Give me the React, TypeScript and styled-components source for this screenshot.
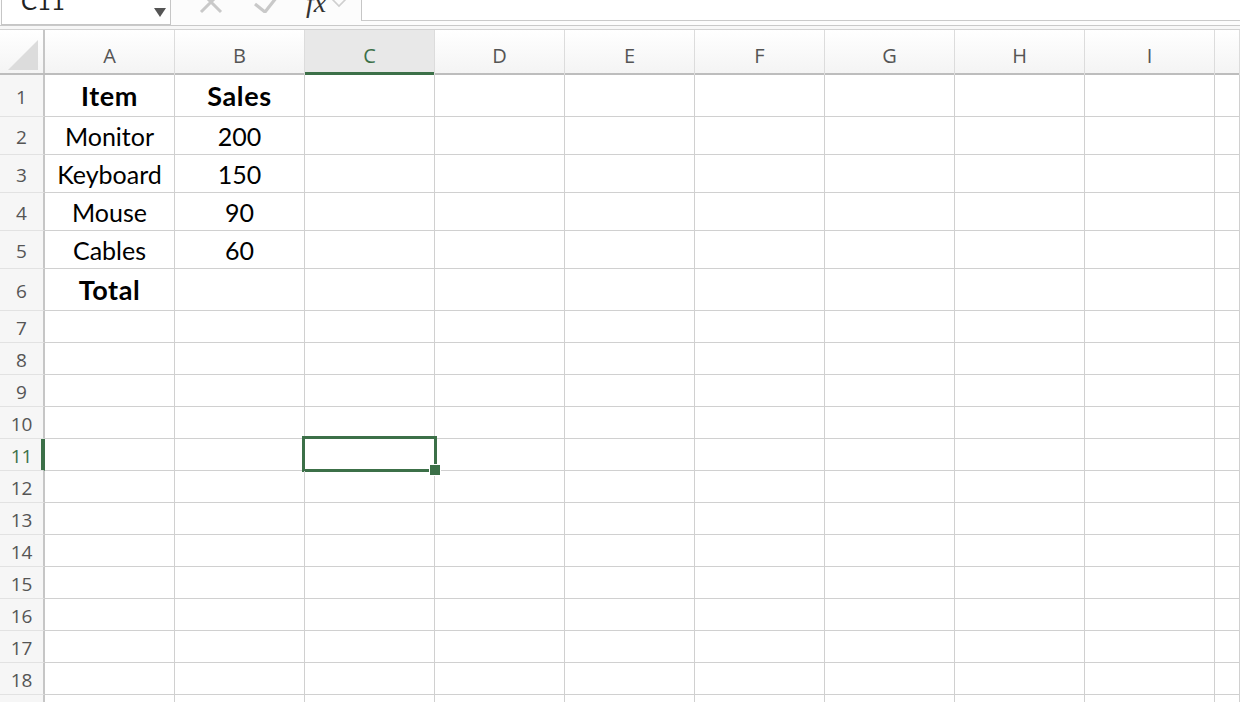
import styled, { createGlobalStyle } from 'styled-components';

const GREEN = '#3c7048';
const GRID = '#d0d0d0';
const COLS = ['A', 'B', 'C', 'D', 'E', 'F', 'G', 'H', 'I', 'J'];
const TEMPLATE = '45px repeat(9, 130px) 1fr';

const ROW_HEIGHTS = [42, 38, 38, 38, 38, 42, 32, 32, 32, 32, 32, 32, 32, 32, 32, 32, 32, 32, 32];

const data: Record<number, { a?: string; b?: string; bold?: boolean }> = {
	1: { a: 'Item', b: 'Sales', bold: true },
	2: { a: 'Monitor', b: '200' },
	3: { a: 'Keyboard', b: '150' },
	4: { a: 'Mouse', b: '90' },
	5: { a: 'Cables', b: '60' },
	6: { a: 'Total', bold: true },
};

const SELECTED_ROW = 11;
const SELECTED_COL = 'C';

function App() {
	return (
		<Wrap>
			<GlobalStyle />
			<Toolbar>
				<NameBox>
					<NameText>C11</NameText>
					<DropArrow />
				</NameBox>
				<Icons>
					<svg width="24" height="24" viewBox="0 0 24 24" style={{ marginTop: -10 }}>
						<path d="M2 2 L22 22 M22 2 L2 22" stroke="#c9c9c9" strokeWidth="3" fill="none" />
					</svg>
					<svg width="28" height="24" viewBox="0 0 28 24" style={{ marginTop: -11 }}>
						<path d="M2 15 L12 23 L27 4" stroke="#c9c9c9" strokeWidth="3.2" fill="none" />
					</svg>
					<Fx>fx</Fx>
					<svg width="16" height="10" viewBox="0 0 16 10" style={{ marginTop: -2 }}>
						<path d="M1 1 L8 8 L15 1" stroke="#cfcfcf" strokeWidth="1.6" fill="none" />
					</svg>
				</Icons>
				<FormulaInput />
			</Toolbar>
			<Sheet>
				<HeaderRow>
					<Corner>
						<svg width="30" height="30" viewBox="0 0 30 30">
							<path d="M0 30 L30 30 L30 0 Z" fill="#dcdcdc" />
						</svg>
					</Corner>
					{COLS.map((c) => (
						<ColHead key={c} $active={c === SELECTED_COL}>
							{c === 'J' ? '' : c}
						</ColHead>
					))}
				</HeaderRow>
				{ROW_HEIGHTS.map((h, i) => {
					const n = i + 1;
					const row = data[n];
					return (
						<Row key={n} $h={h}>
							<RowHead $active={n === SELECTED_ROW}>{n}</RowHead>
							{COLS.map((c) => (
								<Cell key={c} $bold={row?.bold} $selected={n === SELECTED_ROW && c === SELECTED_COL}>
									{c === 'A' ? row?.a : c === 'B' ? row?.b : ''}
								</Cell>
							))}
						</Row>
					);
				})}
			</Sheet>
		</Wrap>
	);
}

export default App;

const GlobalStyle = createGlobalStyle`
	html, body {
		margin: 0;
		padding: 0;
		background: #fff;
		overflow: hidden;
	}
	* {
		box-sizing: border-box;
	}
`;

const Wrap = styled.div`
	width: 1240px;
	height: 702px;
	overflow: hidden;
	font-family: Lato, 'Open Sans', sans-serif;
`;

const Toolbar = styled.div`
	height: 30px;
	display: flex;
	align-items: flex-start;
	background: #fcfcfc;
	border-bottom: 1px solid #d2d2d2;
	box-shadow: inset 0 -3px 0 #f7f7f7, inset 0 -4px 0 #c9c9c9;
	overflow: hidden;
`;

const NameBox = styled.div`
	width: 170px;
	height: 25px;
	margin-left: 1px;
	border: 1px solid #c6c6c6;
	border-top: none;
	background: #fff;
	display: flex;
	justify-content: space-between;
	align-items: flex-start;
	overflow: hidden;
`;

const NameText = styled.span`
	font-size: 24px;
	line-height: 24px;
	margin-top: -11px;
	margin-left: 19px;
	color: #222;
`;

const DropArrow = styled.span`
	width: 0;
	height: 0;
	margin: 8px 4px 0 0;
	border-left: 6px solid transparent;
	border-right: 6px solid transparent;
	border-top: 9px solid #555;
`;

const Icons = styled.div`
	width: 190px;
	display: flex;
	align-items: flex-start;
	padding-left: 28px;
	gap: 31px;

	svg {
		flex-shrink: 0;
	}
	svg:nth-child(2) {
		margin-left: -1px;
	}
	svg:last-child {
		margin-left: -26px;
	}
`;

const Fx = styled.span`
	font-family: 'Liberation Serif', serif;
	font-style: italic;
	font-size: 28px;
	line-height: 28px;
	margin-top: -11px;
	color: #333;
	margin-left: -6px;
`;

const FormulaInput = styled.div`
	flex: 1;
	height: 21px;
	background: #fff;
	border-left: 1px solid #c6c6c6;
	border-bottom: 1px solid #cacaca;
`;

const Sheet = styled.div`
	display: flex;
	flex-direction: column;
`;

const HeaderRow = styled.div`
	display: grid;
	grid-template-columns: ${TEMPLATE};
	height: 45px;
	background: linear-gradient(#ffffff, #f4f4f4);
	border-bottom: 2px solid #bdbdbd;
`;

const Corner = styled.div`
	border-right: 2px solid #c6c6c6;
	display: flex;
	align-items: flex-end;
	justify-content: flex-end;
	padding: 0 5px 3px 0;
`;

const ColHead = styled.div<{ $active?: boolean }>`
	display: flex;
	align-items: center;
	justify-content: center;
	padding-top: 5px;
	font-family: 'Open Sans', sans-serif;
	font-size: 20px;
	color: ${(p) => (p.$active ? GREEN : '#555')};
	background: ${(p) => (p.$active ? '#e8e8e8' : 'transparent')};
	border-right: 1px solid #dcdcdc;
	box-shadow: ${(p) => (p.$active ? `inset 0 -3px 0 ${GREEN}` : 'none')};
	margin-bottom: -2px;
`;

const Row = styled.div<{ $h: number }>`
	display: grid;
	grid-template-columns: ${TEMPLATE};
	height: ${(p) => p.$h}px;
	flex-shrink: 0;
`;

const RowHead = styled.div<{ $active?: boolean }>`
	display: flex;
	align-items: center;
	justify-content: center;
	padding-top: 3px;
	font-family: 'Open Sans', sans-serif;
	font-size: 19px;
	color: ${(p) => (p.$active ? GREEN : '#555')};
	background: #f6f6f6;
	border-right: 2px solid ${(p) => (p.$active ? GREEN : '#c6c6c6')};
	box-shadow: ${(p) => (p.$active ? `inset -2px 0 0 ${GREEN}` : 'none')};
	border-bottom: 1px solid #e2e2e2;
`;

const Cell = styled.div<{ $bold?: boolean; $selected?: boolean }>`
	position: relative;
	display: flex;
	align-items: center;
	justify-content: center;
	border-right: 1px solid ${GRID};
	border-bottom: 1px solid ${GRID};
	font-size: ${(p) => (p.$bold ? '27px' : '25px')};
	font-weight: ${(p) => (p.$bold ? 700 : 400)};
	letter-spacing: ${(p) => (p.$bold ? '0.6px' : '0')};
	color: #000;
	white-space: nowrap;

	${(p) =>
		p.$selected &&
		`
		&::after {
			content: '';
			position: absolute;
			left: -3px;
			top: -3px;
			right: -3px;
			bottom: -2px;
			border: 3px solid ${GREEN};
		}
		&::before {
			content: '';
			position: absolute;
			right: -7px;
			bottom: -6px;
			width: 10px;
			height: 10px;
			background: ${GREEN};
			border: 1px solid #fff;
			z-index: 2;
		}
	`}
`;
